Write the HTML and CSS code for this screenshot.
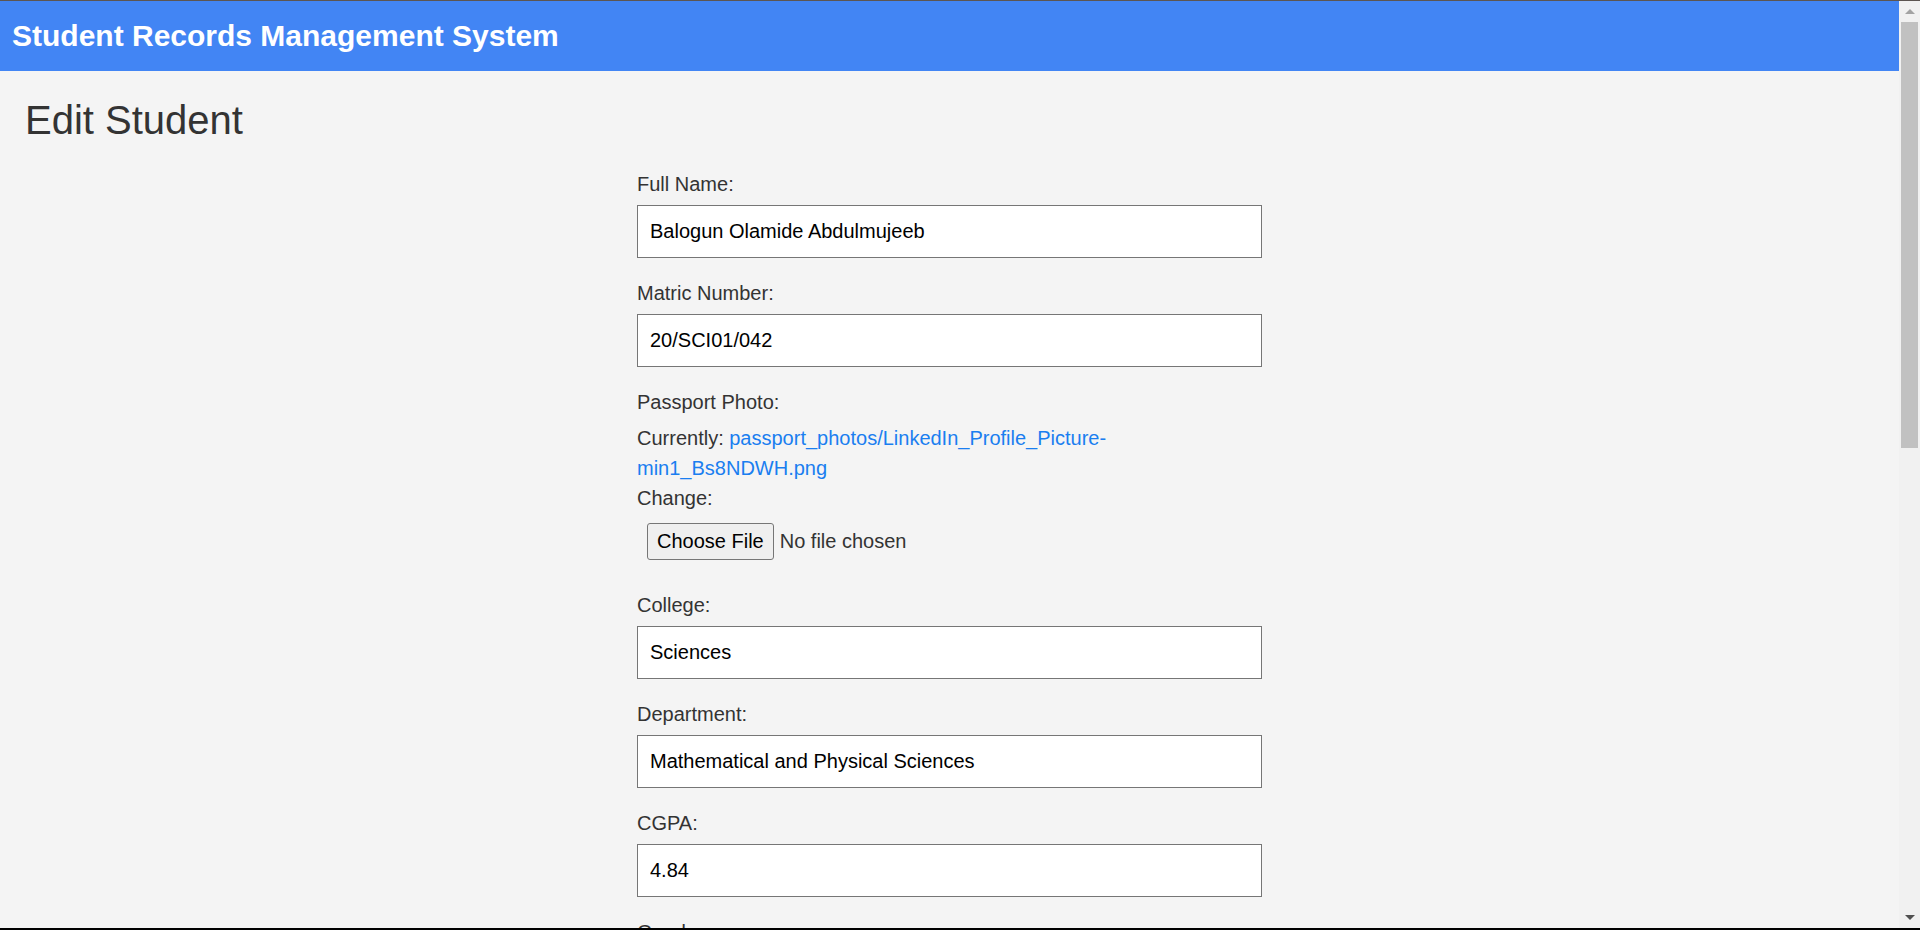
FILE: index.html
```html
<!DOCTYPE html>
<html lang="en">
<head>
<meta charset="utf-8">
<title>Edit Student</title>
<link rel="stylesheet" href="styles.css">
</head>
<body>
<div class="page">
  <header class="topbar">
    <div class="brand">Student Records Management System</div>
  </header>
  <main class="content">
    <h1 class="page-title">Edit Student</h1>
    <form class="student-form">
      <div class="field">
        <label class="field-label" for="full_name">Full Name:</label>
        <input class="text-input" id="full_name" type="text" value="Balogun Olamide Abdulmujeeb">
      </div>
      <div class="field">
        <label class="field-label" for="matric">Matric Number:</label>
        <input class="text-input" id="matric" type="text" value="20/SCI01/042">
      </div>
      <div class="field">
        <label class="field-label" for="photo">Passport Photo:</label>
        <div class="file-info">Currently: <a class="file-link" href="#">passport_photos/LinkedIn_Profile_Picture-min1_Bs8NDWH.png</a><br>Change:</div>
        <input class="file-input" id="photo" type="file">
      </div>
      <div class="field">
        <label class="field-label" for="college">College:</label>
        <input class="text-input" id="college" type="text" value="Sciences">
      </div>
      <div class="field">
        <label class="field-label" for="department">Department:</label>
        <input class="text-input" id="department" type="text" value="Mathematical and Physical Sciences">
      </div>
      <div class="field">
        <label class="field-label" for="cgpa">CGPA:</label>
        <input class="text-input" id="cgpa" type="text" value="4.84">
      </div>
      <div class="field">
        <label class="field-label" for="gender">Gender:</label>
        <select class="text-input" id="gender">
          <option>Male</option>
          <option>Female</option>
        </select>
      </div>
      <div class="field">
        <label class="field-label" for="email">Email:</label>
        <input class="text-input" id="email" type="text" value="">
      </div>
      <div class="field">
        <label class="field-label" for="phone">Phone Number:</label>
        <input class="text-input" id="phone" type="text" value="">
      </div>
      <div class="field">
        <label class="field-label" for="level">Level:</label>
        <input class="text-input" id="level" type="text" value="">
      </div>
      <button class="save-btn" type="submit">Save Changes</button>
    </form>
  </main>
</div>
<aside class="scrollbar" aria-hidden="true">
  <div class="sb-btn"><span class="sb-arrow-up"></span></div>
  <div class="sb-thumb"></div>
  <div class="sb-track"></div>
  <div class="sb-btn"><span class="sb-arrow-down"></span></div>
</aside>
<div class="screen-edge"></div>
</body>
</html>
```

FILE: styles.css
```css
html {
  background: #f4f4f4;
}

body {
  margin: 0;
  display: flex;
  align-items: flex-start;
  font-family: "Liberation Sans", Arial, sans-serif;
  color: #333;
}

.page {
  flex: 1;
  min-width: 0;
  padding-bottom: 120px;
}

.topbar {
  height: 70px;
  border-top: 1px solid #5c5551;
  background: #4285f4;
  display: flex;
  align-items: center;
  padding: 0 12px;
}

.brand {
  color: #fff;
  font-size: 30px;
  font-weight: bold;
}

.content {
  padding: 0 25px;
}

.page-title {
  margin: 26px 0 29px;
  font-size: 40px;
  font-weight: normal;
  color: #333;
  line-height: 46px;
}

.student-form {
  width: 625px;
  margin: 0 auto;
}

.field {
  margin-bottom: 23px;
}

.field-label {
  display: block;
  font-size: 20px;
  line-height: 24px;
  margin-bottom: 9px;
  color: #333;
}

.text-input {
  display: block;
  box-sizing: border-box;
  width: 100%;
  height: 53px;
  padding: 0 12px;
  border: 1px solid #767676;
  border-radius: 0;
  background: #fff;
  font-family: "Liberation Sans", Arial, sans-serif;
  font-size: 20px;
  color: #000;
  outline: none;
}

.file-info {
  font-size: 20px;
  line-height: 30px;
  color: #333;
}

.file-link {
  color: #1a7ef0;
  text-decoration: none;
}

.file-input {
  display: block;
  box-sizing: border-box;
  width: 100%;
  padding: 10px;
  border: 0;
  background: transparent;
  font-family: "Liberation Sans", Arial, sans-serif;
  font-size: 20px;
  line-height: 23px;
  color: #333;
}

.file-input::file-selector-button {
  font-family: "Liberation Sans", Arial, sans-serif;
  font-size: 20px;
  color: #000;
  height: 37px;
  padding: 0 9px;
  margin-right: 6px;
  border: 1px solid #767676;
  border-radius: 3px;
  background: #efefef;
}

.save-btn {
  height: 53px;
  padding: 0 25px;
  border: 0;
  background: #4285f4;
  color: #fff;
  font-family: "Liberation Sans", Arial, sans-serif;
  font-size: 20px;
}

/* fake window scrollbar */
.scrollbar {
  position: sticky;
  top: 0;
  flex: 0 0 21px;
  width: 21px;
  height: 100vh;
  box-sizing: border-box;
  border-top: 1px solid #5c5551;
  background: #f1f1f1;
  display: flex;
  flex-direction: column;
}

.sb-btn {
  height: 21px;
  flex: 0 0 21px;
  display: flex;
  align-items: center;
  justify-content: center;
}

.sb-arrow-up {
  width: 0;
  height: 0;
  border-left: 5px solid transparent;
  border-right: 5px solid transparent;
  border-bottom: 5px solid #a3a3a3;
}

.sb-arrow-down {
  width: 0;
  height: 0;
  border-left: 5px solid transparent;
  border-right: 5px solid transparent;
  border-top: 5px solid #505050;
  margin-top: -4px;
}

.sb-thumb {
  flex: 0 0 426px;
  margin: 0 2px;
  background: #c1c1c1;
}

.sb-track {
  flex: 1;
}

.screen-edge {
  position: fixed;
  left: 0;
  right: 0;
  bottom: 0;
  height: 2px;
  background: #000;
}
```
